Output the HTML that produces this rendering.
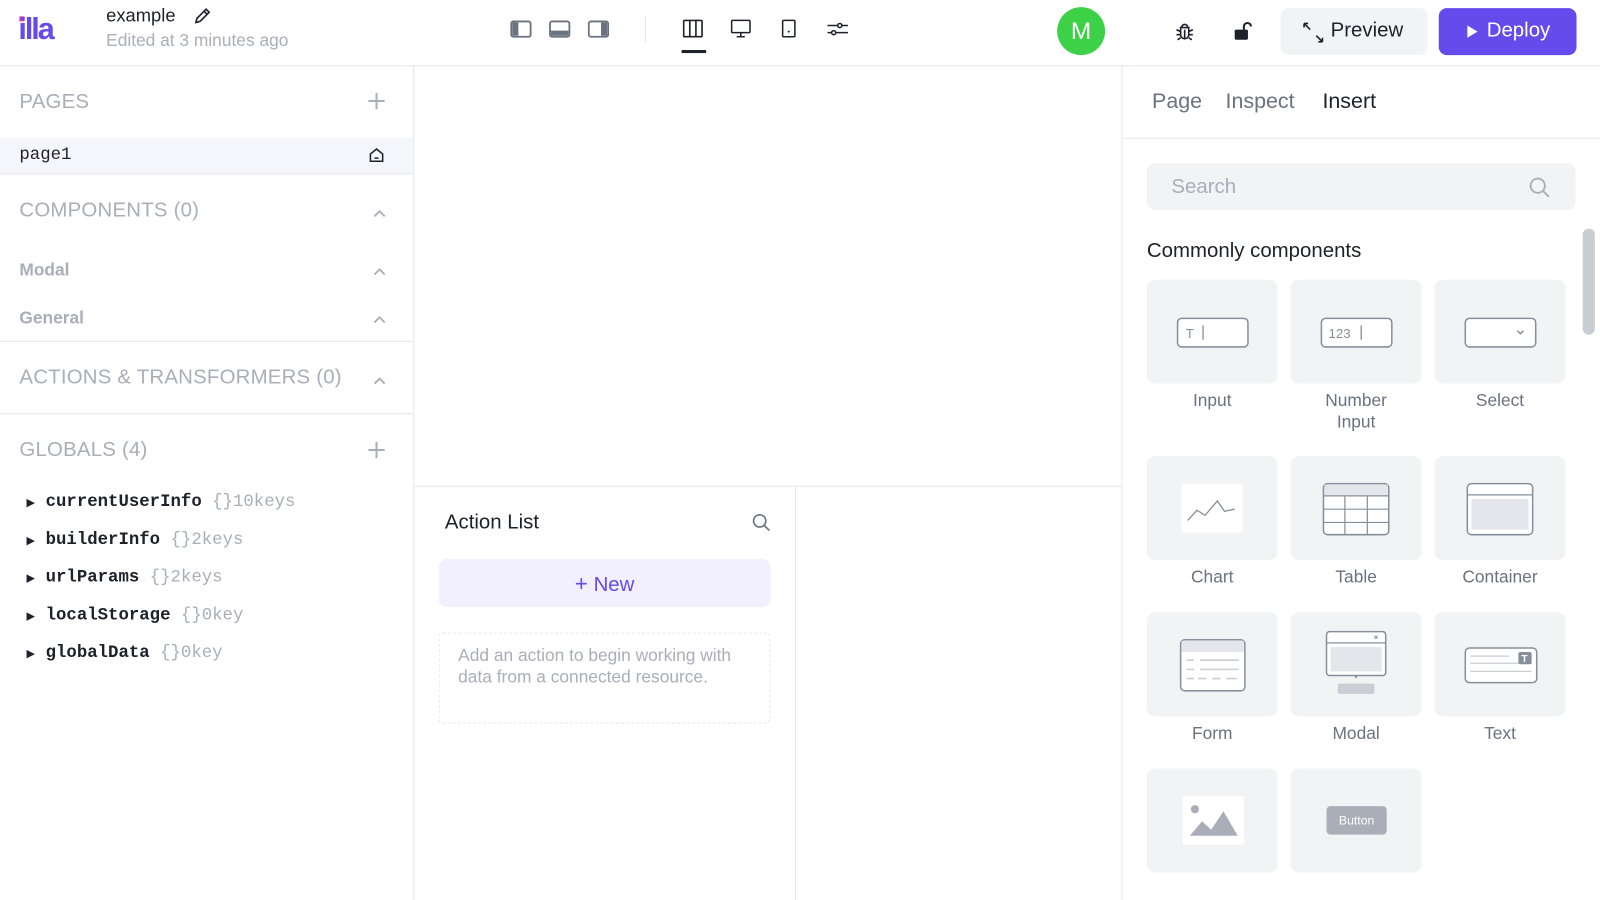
<!DOCTYPE html>
<html><head><meta charset="utf-8">
<style>
*{box-sizing:border-box;margin:0;padding:0}
html,body{width:1600px;height:882px;overflow:hidden;background:#fff}
body{font-family:"Liberation Sans",sans-serif;color:#1d2129}
#w{position:absolute;left:0;top:0;width:1568px;height:864px;transform:scale(1.0204);transform-origin:0 0}
.a{position:absolute}
.hdr{left:0;top:0;width:1568px;height:65px;border-bottom:1px solid #e5e6eb}
.sec{font-size:20px;color:#a9aeb8;letter-spacing:.2px}
.sub{font-size:17px;color:#a9aeb8;font-weight:bold}
.mono{font-family:"Liberation Mono",monospace;font-size:17px}
.card{position:absolute;width:128px;height:102px;background:#f2f3f5;border-radius:8px}
.lbl{position:absolute;width:128px;text-align:center;font-size:17px;color:#6b7280;line-height:21px}
.chev{stroke:#a9aeb8;fill:none;stroke-width:1.8}
</style></head><body><div id="w">
<div class="a hdr"></div>
<div class="a" style="left:19px;top:16px;width:5px;height:5px;background:#f03fa0"></div>
<div class="a" style="left:18px;top:14px;font-size:30px;font-weight:bold;color:#654aec;letter-spacing:-2px;line-height:30px">illa</div>
<div class="a" style="left:104px;top:5px;font-size:18px;color:#1d2129">example</div>
<svg class="a" style="left:188px;top:6px" width="20" height="20" viewBox="0 0 20 20"><path d="M4 16l1-4 9-9 3 3-9 9z M12 5l3 3" stroke="#1d2129" stroke-width="1.6" fill="none"/></svg>
<div class="a" style="left:104px;top:30px;font-size:17px;color:#a9aeb8">Edited at 3 minutes ago</div>
<svg class="a" style="left:500px;top:19px" width="22" height="20"><rect x="1" y="2" width="19" height="15" rx="2" fill="none" stroke="#6b7280" stroke-width="1.8"/><rect x="2" y="3" width="6" height="13" fill="#6b7280"/></svg>
<svg class="a" style="left:538px;top:19px" width="22" height="20"><rect x="1" y="2" width="19" height="15" rx="2" fill="none" stroke="#6b7280" stroke-width="1.8"/><rect x="2" y="11" width="17" height="5" fill="#6b7280"/></svg>
<svg class="a" style="left:576px;top:19px" width="22" height="20"><rect x="1" y="2" width="19" height="15" rx="2" fill="none" stroke="#6b7280" stroke-width="1.8"/><rect x="13" y="3" width="6" height="13" fill="#6b7280"/></svg>
<div class="a" style="left:632px;top:16px;width:1px;height:26px;background:#e5e6eb"></div>
<svg class="a" style="left:669px;top:19px" width="22" height="20"><rect x="1" y="1" width="18" height="16" rx="1" fill="none" stroke="#1d2129" stroke-width="1.6"/><path d="M7 1v16M13 1v16" stroke="#1d2129" stroke-width="1.6"/></svg>
<div class="a" style="left:668px;top:49px;width:24px;height:3px;background:#1d2129"></div>
<svg class="a" style="left:716px;top:19px" width="22" height="20"><rect x="1" y="1" width="18" height="12" rx="1" fill="none" stroke="#1d2129" stroke-width="1.5"/><path d="M10 13v4M6 17h8" stroke="#1d2129" stroke-width="1.5"/></svg>
<svg class="a" style="left:765px;top:19px" width="18" height="20"><rect x="2" y="1" width="12" height="16" rx="1" fill="none" stroke="#1d2129" stroke-width="1.5"/><circle cx="8" cy="12" r="1" fill="#1d2129"/></svg>
<svg class="a" style="left:810px;top:19px" width="22" height="20"><path d="M1 6h20M1 13h20" stroke="#1d2129" stroke-width="1.5"/><circle cx="13" cy="6" r="2" fill="#fff" stroke="#1d2129" stroke-width="1.5"/><circle cx="7" cy="13" r="2" fill="#fff" stroke="#1d2129" stroke-width="1.5"/></svg>
<div class="a" style="left:1036px;top:7px;width:47px;height:47px;border-radius:50%;background:#3cd146;color:#fff;font-size:24px;text-align:center;line-height:47px">M</div>
<svg class="a" style="left:1150px;top:20px" width="22" height="22" viewBox="0 0 22 22"><path d="M7 7h8v7a4 4 0 0 1-8 0z M8 7a3 3 0 0 1 6 0 M11 9v9 M3 9l4 2M19 9l-4 2M3 14h4M19 14h-4M4 19l3-2M18 19l-3-2" stroke="#1d2129" stroke-width="1.6" fill="none"/></svg>
<svg class="a" style="left:1208px;top:20px" width="22" height="22"><rect x="2" y="9" width="13" height="10" rx="1.5" fill="#1d2129"/><path d="M11 9V6a3.5 3.5 0 0 1 7 0" stroke="#1d2129" stroke-width="2" fill="none"/></svg>
<div class="a" style="left:1255px;top:8px;width:144px;height:46px;border-radius:8px;background:#f2f3f5"></div>
<svg class="a" style="left:1276px;top:21px" width="22" height="22"><path d="M2 2l6 6M2 2v4M2 2h4 M20 20l-6-6M20 20v-4M20 20h-4" stroke="#1d2129" stroke-width="1.6" fill="none"/></svg>
<div class="a" style="left:1304px;top:19px;font-size:20px;color:#1d2129">Preview</div>
<div class="a" style="left:1410px;top:8px;width:135px;height:46px;border-radius:8px;background:#654aec"></div>
<svg class="a" style="left:1436px;top:24px" width="14" height="14"><path d="M2 1l10 6-10 6z" fill="#fff"/></svg>
<div class="a" style="left:1457px;top:19px;font-size:20px;color:#fff">Deploy</div>

<div class="a" style="left:405px;top:65px;width:1px;height:817px;background:#e5e6eb"></div>
<div class="a sec" style="left:19px;top:89px">PAGES</div>
<svg class="a" style="left:359px;top:89px" width="20" height="20"><path d="M10 2v16M2 10h16" stroke="#a9aeb8" stroke-width="2"/></svg>
<div class="a" style="left:0;top:135px;width:405px;height:36px;background:#f5f5fc;border-bottom:1px solid #e5e6eb"></div>
<div class="a mono" style="left:19px;top:143px;color:#1d2129">page1</div>
<svg class="a" style="left:361px;top:144px" width="16" height="16"><path d="M2 7l6-5 6 5v7H2z M6 11h4" stroke="#1d2129" stroke-width="1.5" fill="none"/></svg>
<div class="a sec" style="left:19px;top:195px">COMPONENTS (0)</div>
<svg class="a" style="left:365px;top:204px" width="14" height="10"><path class="chev" d="M2 8l5-5 5 5"/></svg>
<div class="a sub" style="left:19px;top:255px">Modal</div>
<svg class="a" style="left:365px;top:261px" width="14" height="10"><path class="chev" d="M2 8l5-5 5 5"/></svg>
<div class="a sub" style="left:19px;top:302px">General</div>
<svg class="a" style="left:365px;top:308px" width="14" height="10"><path class="chev" d="M2 8l5-5 5 5"/></svg>
<div class="a" style="left:0;top:334px;width:405px;height:1px;background:#e5e6eb"></div>
<div class="a sec" style="left:19px;top:359px">ACTIONS &amp; TRANSFORMERS (0)</div>
<svg class="a" style="left:365px;top:368px" width="14" height="10"><path class="chev" d="M2 8l5-5 5 5"/></svg>
<div class="a" style="left:0;top:405px;width:405px;height:1px;background:#e5e6eb"></div>
<div class="a sec" style="left:19px;top:430px">GLOBALS (4)</div>
<svg class="a" style="left:359px;top:431px" width="20" height="20"><path d="M10 2v16M2 10h16" stroke="#a9aeb8" stroke-width="2"/></svg>
<div class="a mono" style="left:26px;top:475px;line-height:35px">
<div><span style="font-size:11px">▶</span> <b>currentUserInfo</b> <span style="color:#a9aeb8">{}10keys</span></div>
<div><span style="font-size:11px">▶</span> <b>builderInfo</b> <span style="color:#a9aeb8">{}2keys</span></div>
<div><span style="font-size:11px">▶</span> <b>urlParams</b> <span style="color:#a9aeb8">{}2keys</span></div>
<div><span style="font-size:11px">▶</span> <b>localStorage</b> <span style="color:#a9aeb8">{}0key</span></div>
<div><span style="font-size:11px">▶</span> <b>globalData</b> <span style="color:#a9aeb8">{}0key</span></div>
</div>

<div class="a" style="left:406px;top:476px;width:693px;height:1px;background:#e5e6eb"></div>
<div class="a" style="left:779px;top:477px;width:1px;height:405px;background:#e5e6eb"></div>
<div class="a" style="left:436px;top:501px;font-size:20px;color:#1d2129">Action List</div>
<svg class="a" style="left:737px;top:503px" width="18" height="18"><circle cx="7.5" cy="7.5" r="6" stroke="#6b7280" stroke-width="1.6" fill="none"/><path d="M12 12l5 5" stroke="#6b7280" stroke-width="1.6"/></svg>
<div class="a" style="left:430px;top:548px;width:325px;height:47px;border-radius:8px;background:#f2efff;color:#654aec;font-size:20px;text-align:center;line-height:47px"><span style="font-size:22px">+</span> New</div>
<div class="a" style="left:430px;top:620px;width:325px;height:89px;border:1px dashed #e5e6eb;border-radius:4px;padding:11px 18px;font-size:17px;color:#a9aeb8;line-height:21px">Add an action to begin working with data from a connected resource.</div>

<div class="a" style="left:1099px;top:65px;width:1px;height:817px;background:#e5e6eb"></div>
<div class="a" style="left:1129px;top:88px;font-size:21px;color:#6b7280">Page</div>
<div class="a" style="left:1201px;top:88px;font-size:21px;color:#6b7280">Inspect</div>
<div class="a" style="left:1296px;top:88px;font-size:21px;color:#1d2129">Insert</div>
<div class="a" style="left:1100px;top:135px;width:468px;height:1px;background:#e5e6eb"></div>
<div class="a" style="left:1124px;top:160px;width:420px;height:46px;border-radius:8px;background:#f2f3f5"></div>
<div class="a" style="left:1148px;top:172px;font-size:20px;color:#a9aeb8">Search</div>
<svg class="a" style="left:1498px;top:173px" width="22" height="22"><circle cx="9" cy="9" r="7" stroke="#a9aeb8" stroke-width="1.8" fill="none"/><path d="M14 14l6 6" stroke="#a9aeb8" stroke-width="1.8"/></svg>
<div class="a" style="left:1124px;top:235px;font-size:20px;color:#1d2129">Commonly components</div>
<div class="a" style="left:1551px;top:224px;width:12px;height:104px;border-radius:6px;background:#c9cdd4"></div>

<div class="card" style="left:1124px;top:274px"><svg class="a" style="left:29px;top:37px" width="72" height="30"><rect x="1" y="1" width="69" height="28" rx="4" fill="#fff" stroke="#86909c" stroke-width="1.5"/><text x="9" y="20" font-size="13" fill="#86909c" font-family="Liberation Sans">T</text><path d="M26 8v14" stroke="#86909c" stroke-width="1.3"/></svg></div>
<div class="lbl" style="left:1124px;top:382px">Input</div>
<div class="card" style="left:1265px;top:274px"><svg class="a" style="left:29px;top:37px" width="72" height="30"><rect x="1" y="1" width="69" height="28" rx="4" fill="#fff" stroke="#86909c" stroke-width="1.5"/><text x="8" y="20" font-size="13" fill="#86909c" font-family="Liberation Sans">123</text><path d="M40 8v14" stroke="#86909c" stroke-width="1.3"/></svg></div>
<div class="lbl" style="left:1265px;top:382px">Number<br>Input</div>
<div class="card" style="left:1406px;top:274px"><svg class="a" style="left:29px;top:37px" width="72" height="30"><rect x="1" y="1" width="69" height="28" rx="4" fill="#fff" stroke="#86909c" stroke-width="1.5"/><path d="M52 13l3 3 3-3" stroke="#86909c" stroke-width="1.5" fill="none"/></svg></div>
<div class="lbl" style="left:1406px;top:382px">Select</div>
<div class="card" style="left:1124px;top:447px"><svg class="a" style="left:34px;top:27px" width="60" height="48"><rect width="60" height="48" fill="#fff"/><path d="M6 36l9-10 8 5 12-14 7 10 10-2" stroke="#86909c" stroke-width="1.3" fill="none"/></svg></div>
<div class="lbl" style="left:1124px;top:555px">Chart</div>
<div class="card" style="left:1265px;top:447px"><svg class="a" style="left:31px;top:26px" width="66" height="52"><rect x="1" y="1" width="64" height="50" rx="4" fill="#fff" stroke="#86909c" stroke-width="1.5"/><rect x="2" y="2" width="62" height="11" fill="#e5e6eb"/><path d="M1 13h64M1 26h64M1 39h64M22 13v38M44 13v38" stroke="#86909c" stroke-width="1.2"/></svg></div>
<div class="lbl" style="left:1265px;top:555px">Table</div>
<div class="card" style="left:1406px;top:447px"><svg class="a" style="left:31px;top:26px" width="66" height="52"><rect x="1" y="1" width="64" height="50" rx="4" fill="#fff" stroke="#86909c" stroke-width="1.5"/><path d="M1 12h64" stroke="#86909c" stroke-width="1.2"/><rect x="5" y="16" width="56" height="30" fill="#e5e6eb"/></svg></div>
<div class="lbl" style="left:1406px;top:555px">Container</div>
<div class="card" style="left:1124px;top:600px"><svg class="a" style="left:32px;top:26px" width="66" height="52"><rect x="1" y="1" width="63" height="50" rx="4" fill="#fff" stroke="#86909c" stroke-width="1.5"/><rect x="2" y="2" width="61" height="11" fill="#e5e6eb"/><path d="M7 21h7M20 21h38M7 30h7M20 30h38M7 39h7M18 39h8M32 39h8M46 39h10" stroke="#c9cdd4" stroke-width="1.5"/></svg></div>
<div class="lbl" style="left:1124px;top:708px">Form</div>
<div class="card" style="left:1265px;top:600px"><svg class="a" style="left:34px;top:18px" width="60" height="64"><rect x="1" y="1" width="58" height="43" rx="3" fill="#fff" stroke="#86909c" stroke-width="1.5"/><path d="M1 12h58" stroke="#86909c" stroke-width="1.2"/><path d="M48 5l3 3M51 5l-3 3" stroke="#86909c"/><rect x="5" y="16" width="50" height="24" fill="#e5e6eb"/><path d="M28 44l2 3 2-3z" fill="#86909c"/><rect x="12" y="52" width="36" height="10" rx="2" fill="#c9cdd4"/></svg></div>
<div class="lbl" style="left:1265px;top:708px">Modal</div>
<div class="card" style="left:1406px;top:600px"><svg class="a" style="left:29px;top:34px" width="72" height="36"><rect x="1" y="1" width="70" height="34" rx="4" fill="#fff" stroke="#86909c" stroke-width="1.5"/><path d="M6 9h38M6 16h60M6 24h60" stroke="#c9cdd4" stroke-width="1.2"/><rect x="53" y="5" width="13" height="12" rx="2" fill="#86909c"/><text x="56" y="15" font-size="10" fill="#fff" font-family="Liberation Sans" font-weight="bold">T</text></svg></div>
<div class="lbl" style="left:1406px;top:708px">Text</div>
<div class="card" style="left:1124px;top:753px"><svg class="a" style="left:35px;top:27px" width="60" height="48"><rect width="60" height="48" rx="2" fill="#fff"/><circle cx="12" cy="13" r="4" fill="#a9aeb8"/><path d="M7 39l12-14 9 8 12-18 14 24z" fill="#a9aeb8"/></svg></div>
<div class="card" style="left:1265px;top:753px"><div class="a" style="left:35px;top:37px;width:59px;height:28px;border-radius:4px;background:#a9aeb8;color:#fff;font-size:12px;text-align:center;line-height:28px">Button</div></div>
</div></body></html>
